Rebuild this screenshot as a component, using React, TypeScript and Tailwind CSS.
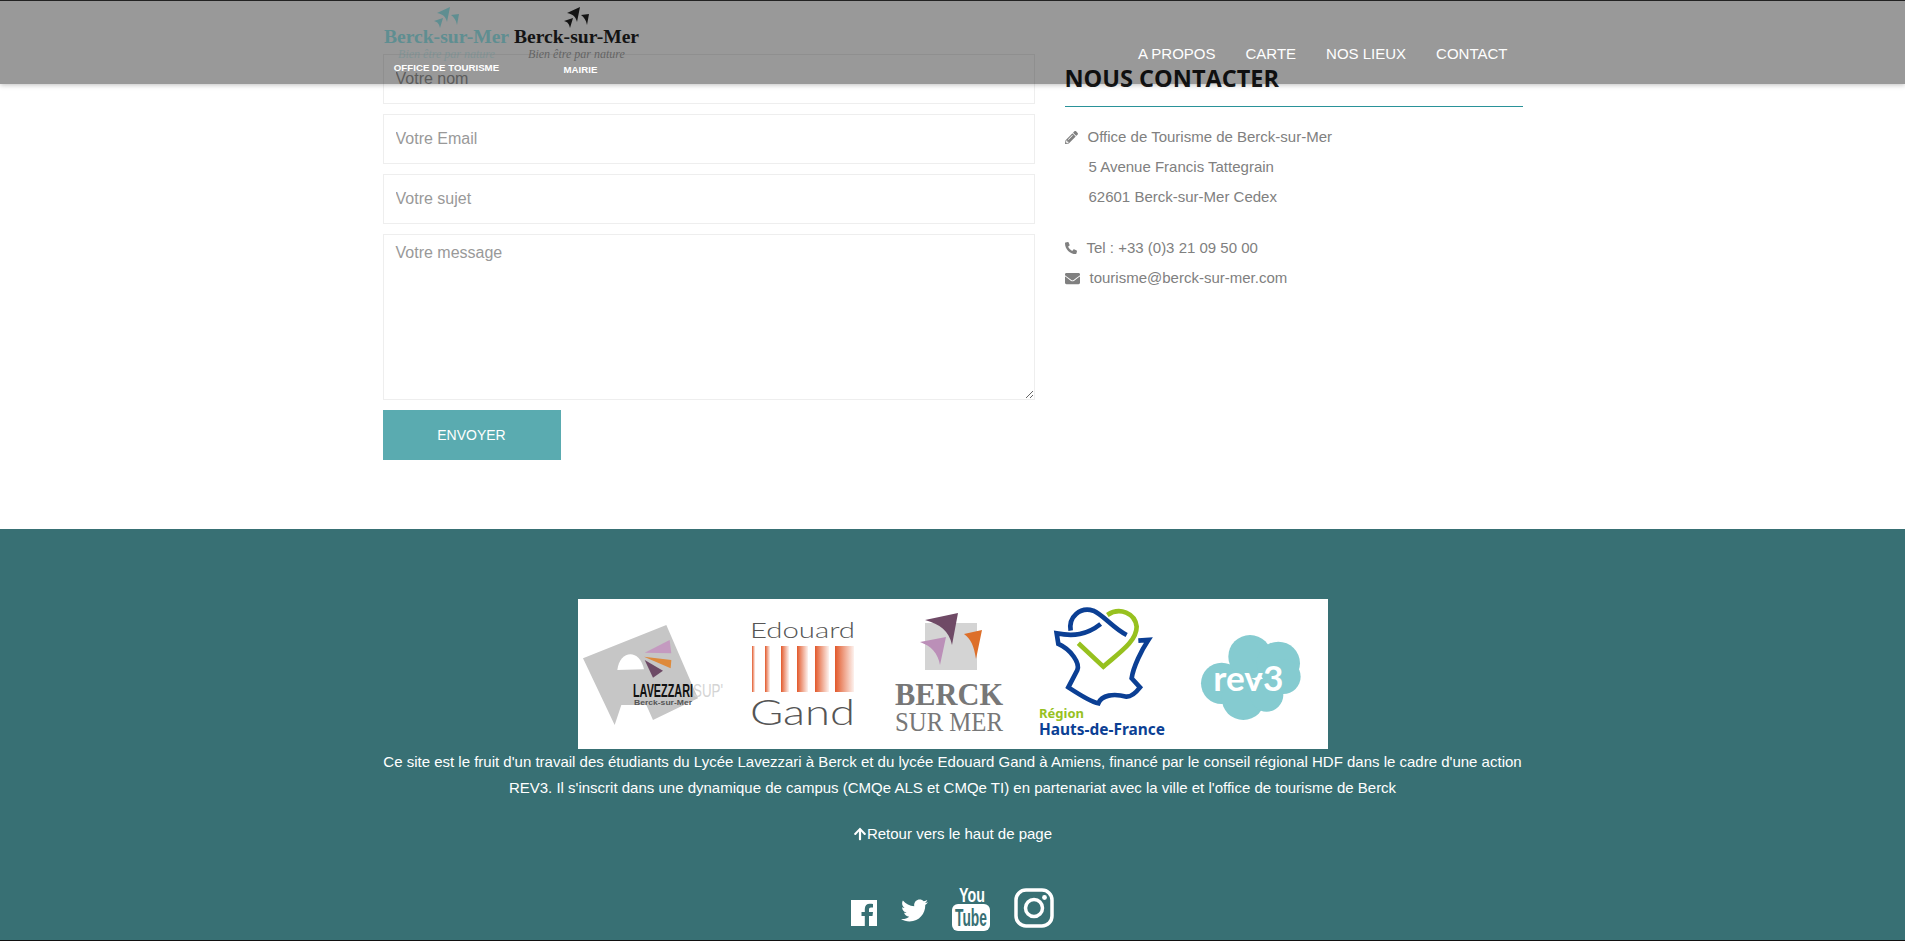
import { FaTwitter, FaPencilAlt, FaPhoneAlt, FaEnvelope, FaArrowUp } from "react-icons/fa";

const NAV = ["A PROPOS", "CARTE", "NOS LIEUX", "CONTACT"];

function Birds({ color }: { color: string }) {
  return (
    <svg width="26" height="22" viewBox="0 0 26 22" className="block">
      <path d="M3 6 L16 0 L13 15 C12 10 9 7 3 6 Z" fill={color} />
      <path d="M0 14 L9 11 L6 21 C5 17 4 15 0 14 Z" fill={color} />
      <path d="M17 8 L25 7 L23 18 C22 13 20 10 17 8 Z" fill={color} />
    </svg>
  );
}

function HeaderLogo({ color, label, labelClass }: { color: string; label: string; labelClass: string }) {
  return (
    <div className="flex w-[128px] flex-col items-center">
      <div className="mt-[6px]">
        <Birds color={color} />
      </div>
      <div className="font-['Liberation_Serif'] -mt-[3px] text-[19.6px] leading-[22px] font-bold whitespace-nowrap" style={{ color }}>
        Berck-sur-Mer
      </div>
      <div className="font-['Liberation_Serif'] text-[12px] leading-[13px] italic whitespace-nowrap opacity-40" style={{ color }}>
        Bien être par nature
      </div>
      <div className={labelClass}>{label}</div>
    </div>
  );
}

function Header() {
  return (
    <header className="absolute top-0 left-0 z-10 h-[84px] w-full border-t border-[#222] bg-black/40 shadow-[0_1px_5px_rgba(0,0,0,0.25)]">
      <div className="mx-auto flex w-[1140px] justify-between">
        <div className="flex gap-[2px]">
          <HeaderLogo color="#5f8e91" label="OFFICE DE TOURISME" labelClass="mt-[1px] text-[9.7px] leading-[12px] font-bold text-white whitespace-nowrap" />
          <HeaderLogo color="#141414" label="MAIRIE" labelClass="mt-[3px] ml-[8px] text-[9.7px] leading-[12px] font-bold text-white whitespace-nowrap" />
        </div>
        <nav className="flex items-start gap-[30px] pt-[44px] pr-[15px]">
          {NAV.map((item) => (
            <a key={item} className="text-[15px] leading-[18px] text-white whitespace-nowrap">{item}</a>
          ))}
        </nav>
      </div>
    </header>
  );
}

function ContactForm() {
  const field = "block w-full border border-[#eee] bg-white px-[12px] text-[16px] text-[#555] outline-none placeholder:text-[#999]";
  return (
    <form className="flex flex-col gap-[10px]">
      <input className={`${field} h-[50px]`} placeholder="Votre nom" />
      <input className={`${field} h-[50px]`} placeholder="Votre Email" />
      <input className={`${field} h-[50px]`} placeholder="Votre sujet" />
      <textarea className={`${field} h-[166px] pt-[6px]`} placeholder="Votre message" />
      <button type="button" className="h-[50px] w-[178px] bg-[#5aabb0] text-[14px] text-white">ENVOYER</button>
    </form>
  );
}

function ContactInfo() {
  return (
    <div>
      <h3 className="font-['Open_Sans'] mt-[10px] text-[23.5px] leading-[28px] font-bold text-[#1a1a1a]">NOUS CONTACTER</h3>
      <div className="mt-[14px] h-px bg-[#2a9299]" />
      <div className="mt-[15px] text-[15px] leading-[30px] text-[#808080]">
        <div className="flex items-center"><FaPencilAlt className="mr-[10px] text-[13px]" />Office de Tourisme de Berck-sur-Mer</div>
        <div className="pl-[24px]">5 Avenue Francis Tattegrain</div>
        <div className="pl-[24px]">62601 Berck-sur-Mer Cedex</div>
        <div className="mt-[21px] flex items-center"><FaPhoneAlt className="mr-[10px] text-[12px]" />Tel : +33 (0)3 21 09 50 00</div>
        <div className="flex items-center"><FaEnvelope className="mr-[10px] text-[15px]" />tourisme@berck-sur-mer.com</div>
      </div>
    </div>
  );
}

function PartnerLogos() {
  // x, width of each fading stripe of the Gand mark
  const stripes = [
    [174, 3],
    [187, 5],
    [203, 8],
    [219, 11],
    [237, 14],
    [257, 19],
  ];
  return (
    <svg width="750" height="150" viewBox="0 0 750 150" className="block bg-white">
      <defs>
        <linearGradient id="gand" x1="0" x2="1" y1="0" y2="0">
          <stop offset="0" stopColor="#e2582a" />
          <stop offset="1" stopColor="#e2582a" stopOpacity="0.08" />
        </linearGradient>
      </defs>

      {/* Lavezzari */}
      <g transform="translate(0 11) scale(0.3333)">
        <path d="M15 145 L265 45 L360 265 L225 330 L205 285 L130 285 L110 345 Z" fill="#c6c6c6" />
        <path d="M118 180 C125 120 185 115 198 178 Z" fill="#fff" />
        <path d="M200 128 L275 90 L280 130 Z" fill="#c49ac0" />
        <path d="M198 140 L280 150 L278 175 Z" fill="#de8a3c" />
        <path d="M200 150 L255 182 L225 203 Z" fill="#6d4a66" />
      </g>
      <text x="55" y="98" fontFamily="Liberation Sans" fontWeight="700" fontSize="19" textLength="60" lengthAdjust="spacingAndGlyphs" fill="#111">LAVEZZARI</text>
      <text x="115" y="98" fontFamily="Liberation Sans" fontSize="19" textLength="30" lengthAdjust="spacingAndGlyphs" fill="#d4d4d4">SUP'</text>
      <text x="56" y="106" fontFamily="Liberation Sans" fontWeight="700" fontSize="8" textLength="58" lengthAdjust="spacingAndGlyphs" fill="#555">Berck-sur-Mer</text>

      {/* Edouard Gand */}
      <text x="172" y="39" fontFamily="Lato" fontWeight="300" fontSize="21" textLength="105" lengthAdjust="spacingAndGlyphs" fill="#555">Edouard</text>
      {stripes.map(([x, w], i) => (
        <rect key={i} x={x} y={47} width={w} height={46} fill="url(#gand)" />
      ))}
      <text x="172" y="126" fontFamily="Lato" fontWeight="300" fontSize="35" textLength="105" lengthAdjust="spacingAndGlyphs" fill="#555">Gand</text>

      {/* Berck sur Mer */}
      <rect x="347" y="24" width="52" height="47" fill="#d4d4d4" />
      <path d="M347 21 L380 14 L374 46 C371 32 362 25 347 21 Z" fill="#6f4a66" />
      <path d="M342 43 L368 38 L362 66 C360 54 353 47 342 43 Z" fill="#bb8fb8" />
      <path d="M386 35 L404 31 L398 60 C396 47 393 40 386 35 Z" fill="#dd6f2a" />
      <text x="317" y="106" fontFamily="Liberation Serif" fontWeight="700" fontSize="32" textLength="108" lengthAdjust="spacingAndGlyphs" fill="#777">BERCK</text>
      <text x="317" y="132" fontFamily="Liberation Serif" fontSize="27" textLength="108" lengthAdjust="spacingAndGlyphs" fill="#777">SUR MER</text>

      {/* Hauts-de-France */}
      <g transform="translate(452 1) scale(0.3333)" fill="none" strokeWidth="14">
        <path d="M290 105 C250 85 220 45 190 32 C150 20 115 50 122 92" stroke="#0b3f94" />
        <path d="M212 72 C170 105 130 110 80 100 L85 132 C125 150 150 190 142 210 L115 262 C150 285 180 305 205 310 C215 285 250 280 290 290 C305 290 320 275 330 262 L305 235 C310 200 335 150 355 120 L325 122" stroke="#0b3f94" />
        <path d="M145 130 L220 200 C265 160 320 125 320 80 C315 40 270 20 232 45" stroke="#97c11f" />
      </g>
      <text x="461" y="119" fontFamily="Noto Sans" fontWeight="700" fontSize="13" fill="#97c11f">Région</text>
      <text x="461" y="136" fontFamily="Noto Sans" fontWeight="700" fontSize="15.5" textLength="126" lengthAdjust="spacingAndGlyphs" fill="#0b3f94">Hauts-de-France</text>

      {/* rev3 */}
      <g transform="translate(612 21) scale(0.3333)">
        <g fill="#85cbd0">
          <circle cx="95" cy="190" r="62" />
          <circle cx="180" cy="110" r="65" />
          <circle cx="265" cy="130" r="65" />
          <circle cx="280" cy="170" r="52" />
          <circle cx="160" cy="235" r="65" />
          <circle cx="230" cy="225" r="50" />
        </g>
        <text x="70" y="212" fontFamily="Lato" fontWeight="700" fontSize="105" textLength="210" lengthAdjust="spacingAndGlyphs" fill="#fff">rev3</text>
      </g>
    </svg>
  );
}

function FacebookMark() {
  return (
    <svg width="26" height="26" viewBox="0 0 26 26" className="block">
      <path d="M0 0 H26 V26 H18 V16 H21.5 L22 12 H18 V9.5 C18 8.2 18.6 7.5 20 7.5 H22 V4 C21 3.9 20 3.8 18.8 3.8 C15.8 3.8 13.8 5.6 13.8 9 V12 H10.5 V16 H13.8 V26 H0 Z" fill="#fff" />
    </svg>
  );
}

function YoutubeMark() {
  return (
    <svg width="38" height="46" viewBox="0 0 38 46" className="block overflow-visible">
      <text transform="translate(7 17) scale(0.68 1)" fontFamily="Liberation Sans" fontWeight="700" fontSize="21" fill="#fff">You</text>
      <rect x="0" y="19" width="38" height="27" rx="6" fill="#fff" />
      <text transform="translate(3 41) scale(0.6 1)" fontFamily="Liberation Sans" fontWeight="700" fontSize="23" fill="#387074">Tube</text>
    </svg>
  );
}

function InstagramMark() {
  return (
    <svg width="40" height="40" viewBox="0 0 40 40" fill="none" stroke="#fff" strokeWidth="3.5" className="block">
      <rect x="2" y="2" width="36" height="36" rx="10" />
      <circle cx="20" cy="20" r="8.5" />
      <circle cx="30.5" cy="9.5" r="2.4" fill="#fff" stroke="none" />
    </svg>
  );
}

function Footer() {
  return (
    <footer className="flex flex-1 flex-col items-center border-b border-[#111] bg-[#387074] text-white">
      <div className="mt-[70px]">
        <PartnerLogos />
      </div>
      <p className="w-[1140px] text-center text-[15px] leading-[26px]">
        Ce site est le fruit d'un travail des étudiants du Lycée Lavezzari à Berck et du lycée Edouard Gand à Amiens, financé par le conseil régional HDF dans le cadre d'une action REV3. Il s'inscrit dans une dynamique de campus (CMQe ALS et CMQe TI) en partenariat avec la ville et l'office de tourisme de Berck
      </p>
      <a className="mt-[20px] flex items-center text-[15px] leading-[26px]">
        <FaArrowUp className="text-[14px]" />
        Retour vers le haut de page
      </a>
      <div className="mt-[38px] flex items-end gap-[24px]">
        <div className="mb-[5px]"><FacebookMark /></div>
        <FaTwitter className="mb-[7px] text-[27px]" />
        <YoutubeMark />
        <div className="mb-[3px]"><InstagramMark /></div>
      </div>
    </footer>
  );
}

export default function App() {
  return (
    <div className="relative flex h-[941px] flex-col overflow-hidden bg-white font-['Liberation_Sans',Arial,sans-serif]">
      <Header />
      <main className="mx-auto grid h-[529px] w-[1140px] grid-cols-[652px_458px] gap-[30px] pt-[54px]">
        <ContactForm />
        <ContactInfo />
      </main>
      <Footer />
    </div>
  );
}
